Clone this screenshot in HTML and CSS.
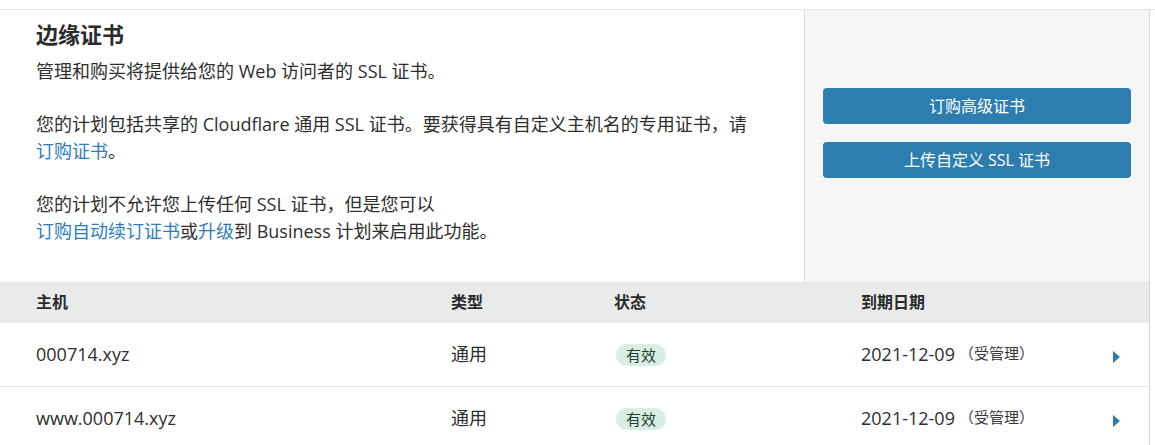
FILE: index.html
```html
<!DOCTYPE html>
<html lang="zh-CN">
<head>
<meta charset="utf-8">
<title>边缘证书</title>
<link rel="stylesheet" href="styles.css">
</head>
<body>
<div class="page">
  <div class="card">
    <div class="top">
      <div class="intro">
        <h2 class="title">边缘证书</h2>
        <p class="para">管理和购买将提供给您的 Web 访问者的 SSL 证书。</p>
        <p class="para">您的计划包括共享的 Cloudflare 通用 SSL 证书。要获得具有自定义主机名的专用证书，请<br><a class="link" href="#">订购证书</a>。</p>
        <p class="para">您的计划不允许您上传任何 SSL 证书，但是您可以<br><a class="link" href="#">订购自动续订证书</a>或<a class="link" href="#">升级</a>到 Business 计划来启用此功能。</p>
      </div>
      <div class="side">
        <button class="btn">订购高级证书</button>
        <button class="btn">上传自定义 SSL 证书</button>
      </div>
    </div>
    <div class="table">
      <div class="row head">
        <div class="cell">主机</div>
        <div class="cell">类型</div>
        <div class="cell">状态</div>
        <div class="cell">到期日期</div>
        <div class="cell"></div>
      </div>
      <div class="row">
        <div class="cell">000714.xyz</div>
        <div class="cell">通用</div>
        <div class="cell"><span class="badge">有效</span></div>
        <div class="cell">2021-12-09<span class="managed">（受管理）</span></div>
        <div class="cell"><span class="caret"></span></div>
      </div>
      <div class="row">
        <div class="cell">www.000714.xyz</div>
        <div class="cell">通用</div>
        <div class="cell"><span class="badge">有效</span></div>
        <div class="cell">2021-12-09<span class="managed">（受管理）</span></div>
        <div class="cell"><span class="caret"></span></div>
      </div>
    </div>
  </div>
</div>
</body>
</html>
```

FILE: styles.css
```css
html, body {
  margin: 0;
  padding: 0;
  background: #ffffff;
}

body {
  font-family: "Open Sans", "Noto Sans CJK SC", sans-serif;
  color: #2e2e2e;
  font-size: 18px;
  line-height: 27px;
}

.page {
  margin-top: 9px;
  border-top: 1px solid #e4e4e4;
}

.card {
  width: 1150px;
  box-sizing: border-box;
  border-right: 1px solid #d8d8d8;
}

.top {
  display: flex;
  height: 272px;
}

.intro {
  flex: 1;
  padding: 10px 0 0 36px;
}

.title {
  margin: 0 0 10px;
  font-size: 22px;
  line-height: 28px;
  font-weight: 700;
  color: #2b2b2b;
}

.para {
  margin: 0 0 26px;
  font-size: 18px;
  line-height: 27px;
}

.para:last-child {
  margin-bottom: 0;
}

.link {
  color: #2f7cbe;
  text-decoration: none;
}

.side {
  flex: 0 0 345px;
  box-sizing: border-box;
  border-left: 1px solid #dcdcdc;
  background: #f6f6f6;
  padding: 78px 18px 0;
  display: flex;
  flex-direction: column;
  gap: 18px;
}

.btn {
  height: 36px;
  border: 0;
  border-radius: 4px;
  background: #2d7db1;
  color: #ffffff;
  font-family: "Open Sans", "Noto Sans CJK SC", sans-serif;
  font-size: 16px;
  line-height: 36px;
  padding: 0;
  cursor: pointer;
}

.row {
  display: grid;
  grid-template-columns: 415px 163px 247px 1fr 36px;
  padding-left: 36px;
  height: 63px;
  align-items: center;
  border-bottom: 1px solid #e6e6e6;
}

.row.head {
  height: 41px;
  background: #e9ebea;
  border-bottom: 0;
  font-size: 16px;
  font-weight: 700;
  color: #2b2b2b;
}

.cell {
  display: flex;
  align-items: center;
}

.badge {
  display: inline-block;
  margin-left: 2px;
  padding: 0 10px;
  height: 22px;
  line-height: 22px;
  border-radius: 11px;
  background: #d9eee2;
  color: #2a3a30;
  font-size: 15px;
}

.managed {
  font-size: 15px;
  margin-left: 4px;
  color: #3a3a3a;
  position: relative;
  top: -1px;
}

.caret {
  display: block;
  width: 0;
  height: 0;
  border-top: 6px solid transparent;
  border-bottom: 6px solid transparent;
  border-left: 7px solid #2d7db1;
  margin-top: 4px;
}
```
